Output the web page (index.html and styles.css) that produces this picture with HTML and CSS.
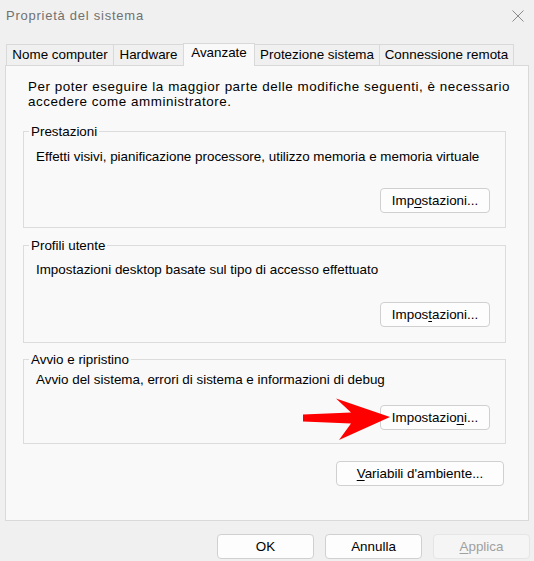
FILE: index.html
```html
<!DOCTYPE html>
<html lang="it">
<head>
  <meta charset="UTF-8">
  <meta name="viewport" content="width=device-width, initial-scale=1.0">
  <title>Proprietà del sistema</title>
  <link rel="stylesheet" href="styles.css">
</head>
<body>
  <div class="window">
    <div class="titlebar">
      <span class="title">Proprietà del sistema</span>
      <svg class="close" width="12" height="12" viewBox="0 0 12 12">
        <path d="M0.5 0.5 L11.5 11.5 M11.5 0.5 L0.5 11.5" stroke="#8a8a8a" stroke-width="1" fill="none"/>
      </svg>
    </div>

    <div class="tabs">
      <div class="tab tab-name">Nome computer</div>
      <div class="tab tab-hw">Hardware</div>
      <div class="tab tab-adv active">Avanzate</div>
      <div class="tab tab-prot">Protezione sistema</div>
      <div class="tab tab-remote">Connessione remota</div>
    </div>

    <div class="panel">
      <p class="intro">Per poter eseguire la maggior parte delle modifiche seguenti, è necessario<br>accedere come amministratore.</p>

      <fieldset class="group group-perf">
        <legend>Prestazioni</legend>
        <p>Effetti visivi, pianificazione processore, utilizzo memoria e memoria virtuale</p>
        <div class="actions">
          <button class="btn">Imp<u>o</u>stazioni...</button>
        </div>
      </fieldset>

      <fieldset class="group group-profiles">
        <legend>Profili utente</legend>
        <p>Impostazioni desktop basate sul tipo di accesso effettuato</p>
        <div class="actions">
          <button class="btn">Impos<u>t</u>azioni...</button>
        </div>
      </fieldset>

      <fieldset class="group group-startup">
        <legend>Avvio e ripristino</legend>
        <p>Avvio del sistema, errori di sistema e informazioni di debug</p>
        <div class="actions">
          <button class="btn">Impostazio<u>n</u>i...</button>
        </div>
      </fieldset>

      <div class="env-row">
        <button class="btn btn-env"><u>V</u>ariabili d'ambiente...</button>
      </div>
    </div>

    <div class="footer">
      <button class="btn btn-dialog">OK</button>
      <button class="btn btn-dialog">Annulla</button>
      <button class="btn btn-dialog" disabled><u>A</u>pplica</button>
    </div>

    <!-- red annotation arrow pointing at the startup settings button -->
    <svg class="arrow" width="92" height="46" viewBox="300 396 92 46">
      <path d="M303 414.5 L351 412.5 L336 398.5 L390 417 L339 440 L351 423.5 L303 421.5 Z" fill="#ff0000"/>
    </svg>
  </div>
</body>
</html>
```

FILE: styles.css
```css
* {
  box-sizing: border-box;
}

body {
  margin: 0;
  font-family: "Liberation Sans", Arial, sans-serif;
  font-size: 13.4px;
  color: #000;
  background: #f0f0f0;
}

.window {
  position: relative;
  width: 534px;
  height: 561px;
  background: #f0f0f0;
  display: flex;
  flex-direction: column;
}

.titlebar {
  height: 31px;
  display: flex;
  align-items: center;
  justify-content: space-between;
  padding: 0 10px 0 6px;
}

.title {
  color: #707070;
  font-size: 13px;
  letter-spacing: 0.75px;
}

.close {
  display: block;
}

.tabs {
  display: flex;
  align-items: flex-end;
  height: 23px;
  margin-top: 12px;
  margin-bottom: -1px;
  padding-left: 6px;
  position: relative;
  z-index: 1;
}

.tab {
  height: 21px;
  margin-bottom: 1px;
  margin-left: -1px;
  border: 1px solid #d9d9d9;
  border-bottom: none;
  line-height: 19px;
  text-align: center;
  background: #f0f0f0;
  white-space: nowrap;
}

.tab:first-child {
  margin-left: 0;
}

.tab-name { width: 108px; }
.tab-hw { width: 71px; }
.tab-adv { width: 72px; }
.tab-prot { width: 126px; }
.tab-remote { width: 135px; }

.tab.active {
  height: 23px;
  margin-bottom: 0;
  line-height: 18px;
  background: #f9f9f9;
  position: relative;
  z-index: 1;
}

.panel {
  margin: 0 5px;
  height: 456px;
  padding: 13px 22px 0 17px;
  border: 1px solid #d9d9d9;
  background: #f9f9f9;
}

.intro {
  margin: 0 0 0 5px;
  line-height: 15px;
  letter-spacing: 0.55px;
  white-space: nowrap;
}

.group {
  margin: 10px 0 0;
  padding: 0 15px 15px 12px;
  border: 1px solid #dcdcdc;
  min-width: 0;
}

.group legend {
  margin-left: -7px;
  padding: 0 2px;
  line-height: 15px;
}

.group p {
  margin: 9px 0 0;
  line-height: 15px;
  white-space: nowrap;
}

.actions {
  display: flex;
  justify-content: flex-end;
  margin-top: 25px;
}

.group-perf {
  margin-top: 15px;
  padding-bottom: 14px;
}

.group-perf p {
  margin-top: 10px;
}

.group-perf .actions {
  margin-top: 24px;
}

.group-startup {
  margin-top: 9px;
  padding-bottom: 13px;
}

.group-startup p {
  margin-top: 5px;
}

.group-startup .actions {
  margin-top: 18px;
}

.btn {
  width: 110px;
  height: 25px;
  padding: 0;
  border: 1px solid #d0d0d0;
  border-radius: 4px;
  background: #fdfdfd;
  font: inherit;
  color: #000;
}

.btn u {
  text-underline-offset: 2px;
}

.env-row {
  display: flex;
  justify-content: flex-end;
  margin-top: 17px;
  padding-right: 2px;
}

.btn-env {
  width: 168px;
}

.footer {
  display: flex;
  justify-content: flex-end;
  gap: 11px;
  padding: 13px 4px 0 0;
}

.btn-dialog {
  width: 97px;
}

.btn-dialog:disabled {
  background: #f5f5f5;
  border-color: #e5e5e5;
  color: #a0a0a0;
}

.arrow {
  position: absolute;
  left: 300px;
  top: 396px;
}
```
